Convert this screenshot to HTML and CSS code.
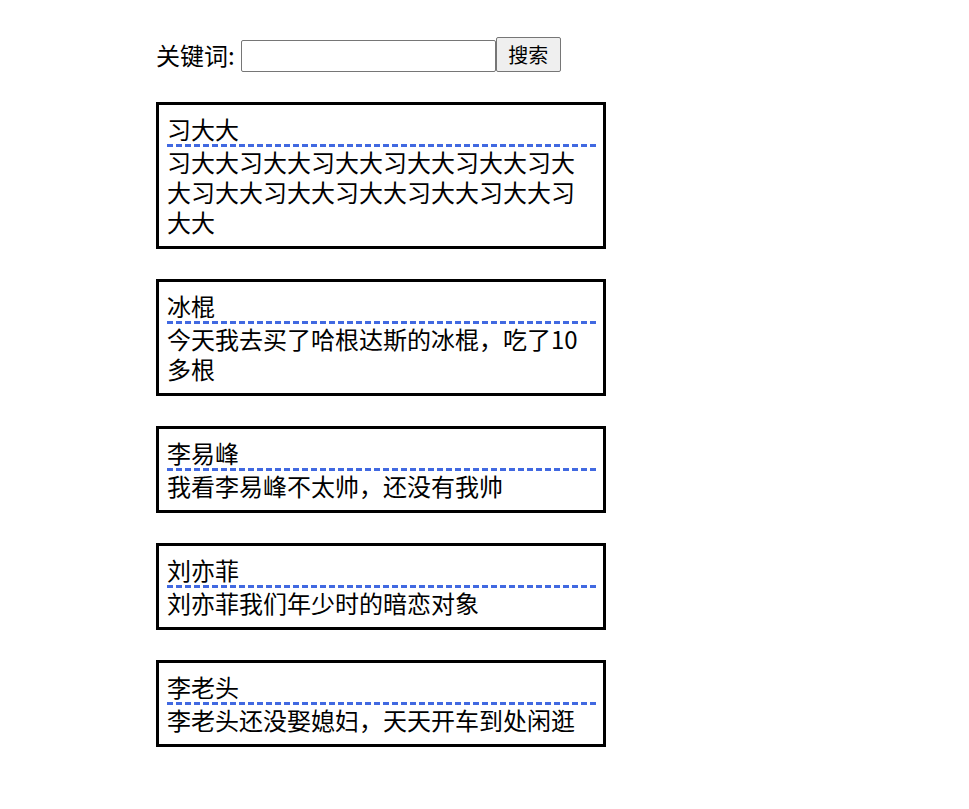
FILE: index.html
```html
<!DOCTYPE html>
<html lang="zh-CN">
<head>
    <meta charset="UTF-8">
    <meta name="viewport" content="width=device-width, initial-scale=1.0">
    <title>搜索</title>
    <link rel="stylesheet" href="styles.css">
</head>
<body>
    <div class="page">
        <div class="search">
            <label for="keyword">关键词:</label>
            <input type="text" id="keyword">
            <button id="searchBtn">搜索</button>
        </div>

        <div class="list">
            <div class="item">
                <div class="item-title">习大大</div>
                <div class="item-content">习大大习大大习大大习大大习大大习大大习大大习大大习大大习大大习大大习大大</div>
            </div>
            <div class="item">
                <div class="item-title">冰棍</div>
                <div class="item-content">今天我去买了哈根达斯的冰棍，吃了10多根</div>
            </div>
            <div class="item">
                <div class="item-title">李易峰</div>
                <div class="item-content">我看李易峰不太帅，还没有我帅</div>
            </div>
            <div class="item">
                <div class="item-title">刘亦菲</div>
                <div class="item-content">刘亦菲我们年少时的暗恋对象</div>
            </div>
            <div class="item">
                <div class="item-title">李老头</div>
                <div class="item-content">李老头还没娶媳妇，天天开车到处闲逛</div>
            </div>
        </div>
    </div>
</body>
</html>
```

FILE: styles.css
```css
body {
    margin: 0;
    font-family: "Noto Sans CJK SC", "Noto Sans", sans-serif;
    color: #000;
    background-color: #fff;
}
.page {
    padding: 37px 0 0 156px;
}
.search {
    display: flex;
    align-items: center;
    height: 35px;
}
.search label {
    font-size: 24px;
    line-height: 30px;
    margin-right: 6px;
}
.search input {
    box-sizing: border-box;
    width: 255px;
    height: 32px;
    border: 1px solid #767676;
    border-radius: 2px;
    margin: 2px 0 0 0;
    font-size: 16px;
}
.search button {
    box-sizing: border-box;
    width: 65px;
    height: 35px;
    padding: 0;
    border: 1px solid #767676;
    border-radius: 2px;
    background-color: #efefef;
    font-family: inherit;
    font-size: 20px;
    color: #000;
}
.list {
    margin-top: 30px;
}
.item {
    box-sizing: border-box;
    width: 450px;
    border: 3px solid #000;
    padding: 9px 7px 9px 8px;
    margin-bottom: 30px;
    font-size: 24px;
    line-height: 30px;
}
/* dashed underline: 6px dash, 3px gap */
.item-title {
    padding-bottom: 3px;
    background: repeating-linear-gradient(to right, #4169e1 0 6px, transparent 6px 9px) left bottom / 100% 3px no-repeat;
}
```
